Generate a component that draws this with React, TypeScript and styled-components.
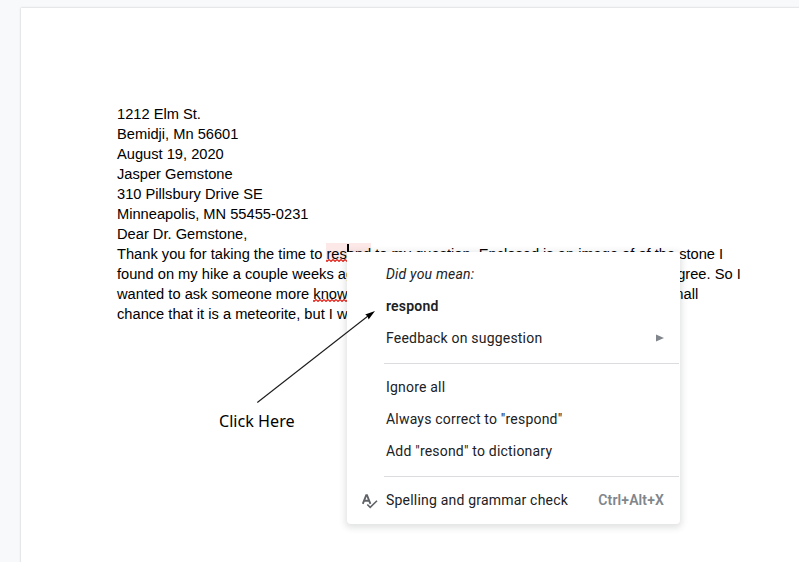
import React from "react";
import styled, { createGlobalStyle } from "styled-components";

const GlobalStyle = createGlobalStyle`
  * { box-sizing: border-box; }
  html, body { margin: 0; height: 100%; overflow: hidden; }
  body { background: #f8f9fb; }
`;

const Workspace = styled.div`
  position: relative;
  width: 799px;
  height: 562px;
  overflow: hidden;
  padding: 8px 0 0 21px;
  background: #f8f9fb;
`;

const Page = styled.main`
  width: 816px;
  height: 600px;
  padding: 96px;
  background: #fff;
  box-shadow: 0 0 2px rgba(60, 64, 67, 0.3);
  font-family: "Liberation Sans", Arial, sans-serif;
  font-size: 14.667px;
  color: #000;
`;

const Line = styled.p`
  display: flex;
  margin: 0;
  height: 20px;
  line-height: 20px;
  white-space: pre;
`;

const Fragment = styled.span<{ $width?: number }>`
  flex: none;
  width: ${(p) => (p.$width ? `${p.$width}px` : "auto")};
`;

const Misspelled = styled.span<{ $active?: boolean }>`
  position: relative;
  flex: none;
  height: 18px;
  margin-top: -1px;
  padding-top: 1px;
  background: ${(p) => (p.$active ? "#fce8e6" : "transparent")};

  &::after {
    content: "";
    position: absolute;
    left: 0;
    right: 0;
    bottom: -1px;
    height: 3px;
    background: url("data:image/svg+xml,%3Csvg xmlns='http://www.w3.org/2000/svg' width='4' height='3'%3E%3Cpath d='M-1 0 L1 2 L3 0 L5 2' transform='translate(0 .5)' fill='none' stroke='%23e0241b' stroke-width='1.2'/%3E%3C/svg%3E") repeat-x;
  }
`;

const Caret = styled.i`
  position: absolute;
  left: 347px;
  top: 244px;
  width: 2px;
  height: 18px;
  background: #000;
`;

const Menu = styled.div`
  position: absolute;
  left: 347px;
  top: 252px;
  width: 333px;
  height: 272px;
  padding: 6px 0 8px;
  background: #fff;
  border-radius: 0 4px 4px 4px;
  box-shadow: 0 2px 6px 2px rgba(60, 64, 67, 0.15);
  font-family: Roboto, sans-serif;
  font-size: 14px;
  letter-spacing: 0.2px;
  color: #202124;
`;

const Item = styled.div<{ $bold?: boolean; $italic?: boolean }>`
  display: flex;
  align-items: center;
  height: 32px;
  padding: 0 16px 0 15px;
  white-space: nowrap;
  font-weight: ${(p) => (p.$bold ? 600 : 400)};
  font-style: ${(p) => (p.$italic ? "italic" : "normal")};
`;

const IconSlot = styled.span`
  flex: none;
  display: flex;
  width: 24px;
`;

const Label = styled.span`
  flex: 1;
`;

const Shortcut = styled.span`
  font-weight: 600;
  letter-spacing: 0.12px;
  color: #80868b;
`;

const Divider = styled.hr`
  height: 1px;
  margin: 9px 1px 7px 37px;
  border: 0;
  background: #dadce0;
`;

const Annotation = styled.div`
  position: absolute;
  left: 219px;
  top: 409px;
  font: 17px/24px "Noto Sans", sans-serif;
  white-space: nowrap;
  transform: scaleX(0.95);
  transform-origin: left;
  color: #000;
`;

const ArrowLayer = styled.svg`
  position: absolute;
  left: 250px;
  top: 305px;
`;

const address = [
  "1212 Elm St.",
  "Bemidji, Mn 56601",
  "August 19, 2020",
  "Jasper Gemstone",
  "310 Pillsbury Drive SE",
  "Minneapolis, MN 55455-0231",
  "Dear Dr. Gemstone,",
];

function SpellIcon() {
  return (
    <svg width="18" height="18" viewBox="0 0 18 18" fill="none" stroke="#5f6368">
      <path d="M0.8 12.8 L4.2 4.1 H5 L8.4 12.8 M2.2 9.8 H7" strokeWidth="1.9" />
      <path d="M5.3 13.5 L8.2 16.4 L15 9.7" strokeWidth="1.6" />
    </svg>
  );
}

export default function App() {
  return (
    <Workspace>
      <GlobalStyle />
      <Page>
        {address.map((text) => (
          <Line key={text}>{text}</Line>
        ))}
        <Line>
          <Fragment>Thank you for taking the time to </Fragment>
          <Misspelled $active>resond</Misspelled>
          <Fragment> to my question. Enclosed is an image of of the stone I</Fragment>
        </Line>
        <Line>
          <Fragment $width={552}>found on my hike a couple weeks ago.</Fragment>
          <Fragment>agree. So I</Fragment>
        </Line>
        <Line>
          <Fragment>wanted to ask someone more </Fragment>
          <Misspelled>knowle</Misspelled>
          <Fragment $width={305} />
          <Fragment>small</Fragment>
        </Line>
        <Line>chance that it is a meteorite, but I wa</Line>
      </Page>
      <Caret />
      <Menu>
        <Item $italic>
          <IconSlot />
          <Label>Did you mean:</Label>
        </Item>
        <Item $bold>
          <IconSlot />
          <Label>respond</Label>
        </Item>
        <Item>
          <IconSlot />
          <Label>Feedback on suggestion</Label>
          <svg width="8" height="8" viewBox="0 0 8 8">
            <path d="M0 0.5 L8 4 L0 7.5 Z" fill="#80868b" />
          </svg>
        </Item>
        <Divider />
        <Item>
          <IconSlot />
          <Label>Ignore all</Label>
        </Item>
        <Item>
          <IconSlot />
          <Label>Always correct to "respond"</Label>
        </Item>
        <Item>
          <IconSlot />
          <Label>Add "resond" to dictionary</Label>
        </Item>
        <Divider />
        <Item>
          <IconSlot>
            <SpellIcon />
          </IconSlot>
          <Label>Spelling and grammar check</Label>
          <Shortcut>Ctrl+Alt+X</Shortcut>
        </Item>
      </Menu>
      <ArrowLayer width="130" height="105" viewBox="250 305 130 105">
        <path d="M257.3 402.5 L368 316" stroke="#1b1b1b" strokeWidth="1.1" />
        <path d="M375 311 L365.2 314.6 L367.6 316.3 L368.6 319.4 Z" fill="#000" />
      </ArrowLayer>
      <Annotation>Click Here</Annotation>
    </Workspace>
  );
}
